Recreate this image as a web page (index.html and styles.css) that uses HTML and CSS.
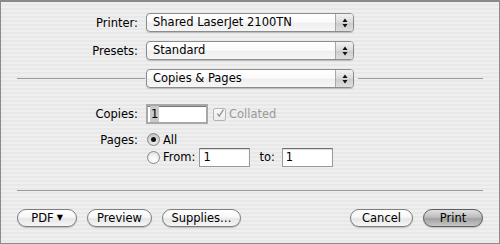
FILE: index.html
```html
<!DOCTYPE html>
<html>
<head>
<meta charset="utf-8">
<link rel="stylesheet" href="styles.css">
</head>
<body>
<div class="window">
  <div class="row row-popup">
    <span class="label">Printer:</span>
    <div class="popup">
      <span class="popup-text">Shared LaserJet 2100TN</span>
      <span class="popup-arrows"><svg width="6" height="10" viewBox="0 0 6 10"><polygon points="0.5,4 3,0.5 5.5,4" fill="#111"/><polygon points="0.5,6 3,9.5 5.5,6" fill="#111"/></svg></span>
    </div>
  </div>
  <div class="row row-popup gap9">
    <span class="label">Presets:</span>
    <div class="popup">
      <span class="popup-text">Standard</span>
      <span class="popup-arrows"><svg width="6" height="10" viewBox="0 0 6 10"><polygon points="0.5,4 3,0.5 5.5,4" fill="#111"/><polygon points="0.5,6 3,9.5 5.5,6" fill="#111"/></svg></span>
    </div>
  </div>
  <div class="row sep-row gap9">
    <span class="line line-left"></span>
    <div class="popup">
      <span class="popup-text">Copies &amp; Pages</span>
      <span class="popup-arrows"><svg width="6" height="10" viewBox="0 0 6 10"><polygon points="0.5,4 3,0.5 5.5,4" fill="#111"/><polygon points="0.5,6 3,9.5 5.5,6" fill="#111"/></svg></span>
    </div>
    <span class="line line-right"></span>
  </div>
  <div class="row row-copies">
    <span class="label">Copies:</span>
    <div class="textfield focused"><span class="sel">1</span></div>
    <span class="checkbox"><svg width="13" height="13" viewBox="0 0 13 13"><path d="M3 6.5 L5.5 10 L11 1.5" fill="none" stroke="#8c8c8c" stroke-width="1.6"/></svg></span>
    <span class="check-label">Collated</span>
  </div>
  <div class="row row-pages">
    <span class="label">Pages:</span>
    <span class="radio on"><span class="dot"></span></span>
    <span class="radio-label">All</span>
  </div>
  <div class="row row-from">
    <span class="label"></span>
    <span class="radio"></span>
    <span class="radio-label">From:</span>
    <div class="textfield from-field">1</div>
    <span class="to-label">to:</span>
    <div class="textfield to-field">1</div>
  </div>
  <div class="bottom-line"></div>
  <div class="buttons">
    <span class="btn w-pdf">PDF <span class="tri">▼</span></span>
    <span class="btn w-preview">Preview</span>
    <span class="btn w-supplies">Supplies…</span>
    <span class="spacer"></span>
    <span class="btn w-cancel">Cancel</span>
    <span class="btn default w-print">Print</span>
  </div>
</div>
</body>
</html>
```
FILE: styles.css
```css
* { box-sizing: border-box; }
html, body { margin: 0; padding: 0; }
body {
  width: 500px;
  height: 244px;
  font-family: "DejaVu Sans", sans-serif;
  font-size: 11.5px;
  color: #000;
  background: #fff;
}
.window {
  width: 500px;
  height: 244px;
  border: 1px solid #8a8a8a;
  border-top: 2px solid #8a8a8a;
  background: repeating-linear-gradient(to bottom, #efefef 0, #efefef 2px, #e8e8e8 2px, #e8e8e8 4px);
  display: flex;
  flex-direction: column;
  padding-top: 11px;
}
.row { display: flex; align-items: center; }
.gap9 { margin-top: 9px; }
.row-popup { height: 19px; }
.label {
  width: 145px;
  flex: none;
  text-align: right;
  padding-right: 8px;
}
.popup {
  width: 208px;
  height: 19px;
  flex: none;
  display: flex;
  border: 1px solid #8c8c8c;
  border-radius: 4px;
  background: linear-gradient(to bottom, #ffffff 0%, #fbfbfb 45%, #efefef 55%, #f6f6f6 100%);
  box-shadow: 0 1px 1px rgba(0,0,0,0.2);
}
.popup-text {
  flex: 1;
  padding-left: 6px;
  line-height: 17px;
  white-space: nowrap;
}
.popup-arrows {
  width: 18px;
  flex: none;
  border-left: 1px solid #a8a8a8;
  border-radius: 0 3px 3px 0;
  background: linear-gradient(to bottom, #f2f2f2 0%, #dadada 50%, #cbcbcb 51%, #dedede 100%);
  display: flex;
  align-items: center;
  justify-content: center;
}
.sep-row { height: 19px; padding-left: 16px; }
.line { height: 1px; background: #9a9a9a; }
.line-left { width: 128px; margin-right: 1px; }
.line-right { width: 125px; margin-left: 4px; }
.row-copies { margin-top: 16px; height: 20px; }
.textfield {
  background: #fff;
  border: 1px solid #9a9a9a;
  border-top-color: #6e6e6e;
  box-shadow: inset 0 1px 1px rgba(0,0,0,0.15);
  height: 20px;
  padding-left: 3px;
  line-height: 18px;
}
.textfield.focused {
  width: 62px;
  border: 2px solid #a8a8a8;
  box-shadow: inset 0 1px 0 #777;
  padding-left: 2px;
  line-height: 16px;
}
.sel {
  display: inline-block;
  background: #c9c9c9;
  padding: 0 1px;
  height: 16px;
}
.checkbox {
  width: 13px;
  height: 13px;
  margin-left: 5px;
  border: 1px solid #b5b5b5;
  border-radius: 2px;
  background: linear-gradient(to bottom, #fafafa, #ececec);
  display: flex;
  align-items: flex-start;
  justify-content: center;
}
.checkbox svg { margin-top: -2px; margin-left: 1px; }
.check-label { color: #9a9a9a; margin-left: 3px; }
.row-pages { margin-top: 8px; height: 15px; }
.radio {
  width: 13px;
  height: 13px;
  flex: none;
  margin-left: 1px;
  border-radius: 50%;
  border: 1px solid #8a8a8a;
  background: radial-gradient(circle at 50% 70%, #ffffff 0%, #f2f2f2 50%, #d0d0d0 100%);
  display: flex;
  align-items: center;
  justify-content: center;
}
.radio.on {
  background: radial-gradient(circle at 50% 70%, #f4f4f4 0%, #d0d0d0 60%, #a8a8a8 100%);
}
.dot { width: 5px; height: 5px; border-radius: 50%; background: #111; }
.radio-label { margin-left: 3px; }
.row-from { height: 20px; }
.from-field { width: 51px; margin-left: 4px; height: 19px; line-height: 17px; }
.to-label { margin-left: 9px; }
.to-field { width: 51px; margin-left: 7px; height: 19px; line-height: 17px; }
.bottom-line {
  margin: 23px 16px 0 16px;
  height: 1px;
  background: #9a9a9a;
}
.buttons {
  display: flex;
  margin-top: 18px;
  padding: 0 16px;
  gap: 10px;
}
.spacer { flex: 1; }
.btn {
  height: 18px;
  border: 1px solid #7e7e7e;
  border-radius: 9px;
  background: linear-gradient(to bottom, #ffffff 0%, #f7f7f7 45%, #e6e6e6 55%, #f6f6f6 100%);
  box-shadow: 0 1px 1px rgba(0,0,0,0.2);
  display: flex;
  align-items: center;
  justify-content: center;
  line-height: 16px;
  white-space: nowrap;
}
.btn.default {
  border-color: #5e5e5e;
  background: linear-gradient(to bottom, #e0e0e0 0%, #bdbdbd 45%, #a2a2a2 55%, #c6c6c6 100%);
}
.tri { font-size: 8px; margin-left: 3px; }
.w-pdf { width: 60px; }
.w-preview { width: 65px; }
.w-supplies { width: 79px; }
.w-cancel { width: 63px; }
.w-print { width: 60px; }
```
